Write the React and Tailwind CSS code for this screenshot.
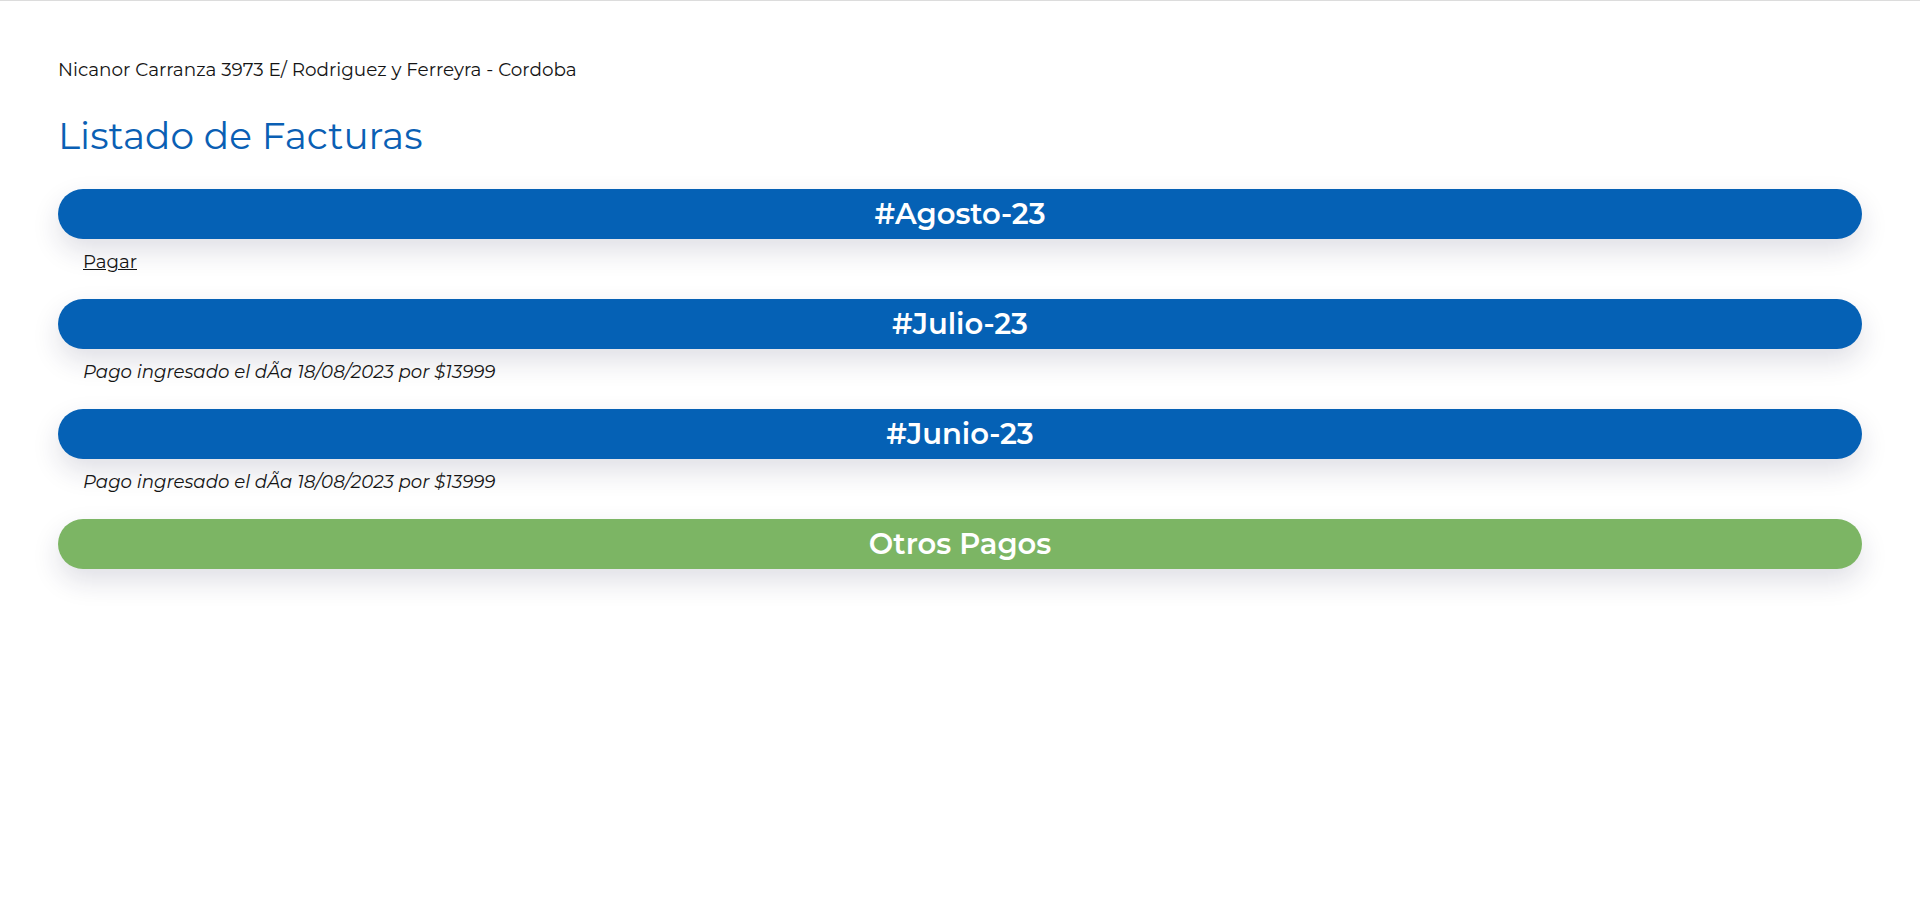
import React from 'react'

const facturas = [
  { id: 1, titulo: '#Agosto-23', pagado: false },
  { id: 2, titulo: '#Julio-23', pagado: true, detalle: 'Pago ingresado el dÃa 18/08/2023 por $13999' },
  { id: 3, titulo: '#Junio-23', pagado: true, detalle: 'Pago ingresado el dÃa 18/08/2023 por $13999' },
]

export default function App() {
  return (
    <div className="min-h-screen bg-white border-t border-[#dcdcdc] font-['Montserrat','Inter',sans-serif] text-[#141414]">
      <div className="px-[58px] pt-[57px]">

        {/* ── Direccion ───────────────────────────── */}
        <p className="text-[18.4px] leading-6">Nicanor Carranza 3973 E/ Rodriguez y Ferreyra - Cordoba</p>

        <h2 className="mt-[31px] text-[37.5px] leading-[45px] text-[#0a5fb4]">Listado de Facturas</h2>

        {/* ── Facturas ────────────────────────────── */}
        <div className="mt-[31px] flex flex-col">
          {facturas.map((f) => (
            <div key={f.id} className="flex flex-col">
              <div className="h-[50px] rounded-full bg-[#0561b5] flex items-center justify-center text-white text-[29px] font-semibold shadow-[0_12px_28px_rgba(30,30,70,0.14)]">
                {f.titulo}
              </div>
              <div className="h-[60px] pl-[25px] pt-[11px]">
                {f.pagado ? (
                  <p className="text-[18.2px] leading-6 italic">{f.detalle}</p>
                ) : (
                  <a href="#" className="text-[18.2px] leading-6 underline">Pagar</a>
                )}
              </div>
            </div>
          ))}

          <div className="h-[50px] rounded-full bg-[#7cb564] flex items-center justify-center text-white text-[29px] font-semibold shadow-[0_12px_28px_rgba(30,30,70,0.14)]">
            Otros Pagos
          </div>
        </div>
      </div>
    </div>
  )
}
